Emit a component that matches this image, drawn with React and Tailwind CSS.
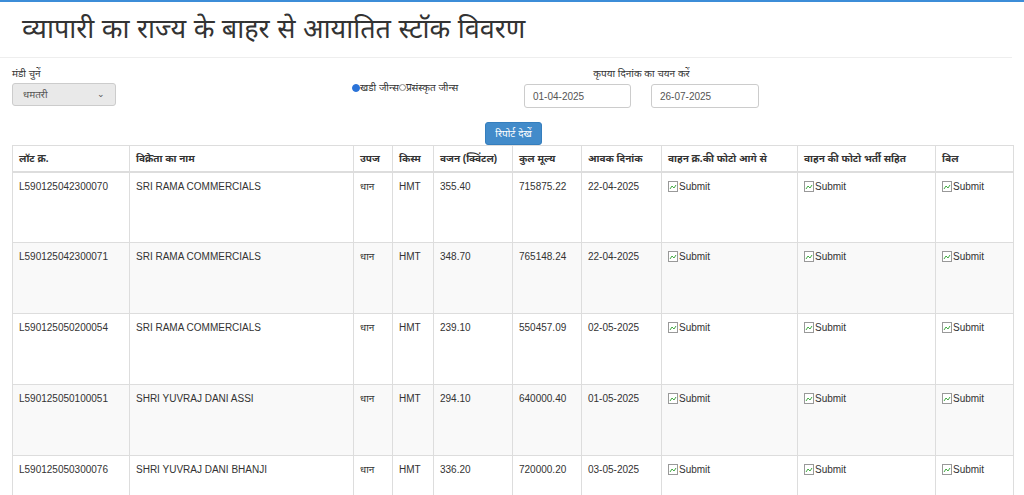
export default function App() {
  const cols = [117, 224, 39, 41, 79, 69, 80, 136, 138, 78];
  const heads = ["लॉट क्र.", "विक्रेता का नाम", "उपज", "किस्म", "वजन (क्विंटल)", "कुल मूल्य", "आवक दिनांक", "वाहन क्र.की फोटो आगे से", "वाहन की फोटो भर्ती सहित", "बिल"];
  const rows = [
    ["L590125042300070", "SRI RAMA COMMERCIALS", "धान", "HMT", "355.40", "715875.22", "22-04-2025"],
    ["L590125042300071", "SRI RAMA COMMERCIALS", "धान", "HMT", "348.70", "765148.24", "22-04-2025"],
    ["L590125050200054", "SRI RAMA COMMERCIALS", "धान", "HMT", "239.10", "550457.09", "02-05-2025"],
    ["L590125050100051", "SHRI YUVRAJ DANI ASSI", "धान", "HMT", "294.10", "640000.40", "01-05-2025"],
    ["L590125050300076", "SHRI YUVRAJ DANI BHANJI", "धान", "HMT", "336.20", "720000.20", "03-05-2025"],
  ];
  const Img = () => (
    <span className="inline-flex items-center gap-[1px]">
      <svg width="10" height="11" viewBox="0 0 10 11"><rect x="0.5" y="0.5" width="9" height="10" fill="#fff" stroke="#999"/><path d="M2 8 L4 5 L6 7 L8 4" stroke="#4a4" fill="none"/></svg>
      Submit
    </span>
  );
  return (
    <div className="w-[1024px] h-[495px] overflow-hidden bg-white text-[#333] border-t-2 border-[#3c8dd8]" style={{ fontFamily: '"Liberation Sans","Noto Sans",sans-serif' }}>
      <h1 className="text-[27px] font-normal leading-none pl-[22px] pt-[14px] pb-[14px] text-[#333] border-b border-[#eee] w-[1012px]">व्यापारी का राज्य के बाहर से आयातित स्टॉक विवरण</h1>
      <div className="flex items-start px-[12px] pt-[8px] text-[10px] h-[64px]">
        <div className="w-[340px]">
          <div>मंडी चुनें</div>
          <div className="mt-[2px] w-[104px] h-[23px] bg-[#e9e9e9] border border-[#ccc] rounded-[3px] flex items-center justify-between px-[10px] text-[#555]">धमतरी<span className="text-[9px]">⌄</span></div>
        </div>
        <div className="w-[172px] pt-[14px] flex items-center">
          <span className="inline-block w-[8px] h-[8px] rounded-full bg-[#2a73d8] border border-[#2a73d8]"></span>खडी जीन्स
          <span className="inline-block w-[7px] h-[7px] rounded-full border border-[#888]"></span>प्रसंस्कृत जीन्स
        </div>
        <div className="flex flex-col items-center">
          <div className="mb-[3px]">कृपया दिनांक का चयन करें</div>
          <div className="flex gap-[20px]">
            <div className="w-[107px] h-[24px] border border-[#ccc] rounded-[3px] flex items-center px-[8px] text-[#555]">01-04-2025</div>
            <div className="w-[108px] h-[24px] border border-[#ccc] rounded-[3px] flex items-center px-[8px] text-[#555]">26-07-2025</div>
          </div>
        </div>
      </div>
      <div className="pl-[485px] h-[23px]">
        <div className="w-[57px] h-[23px] bg-[#428bca] text-white text-[10px] rounded-[3px] flex items-center justify-center border border-[#357ebd]">रिपोर्ट देखें</div>
      </div>
      <table className="ml-[12px] border-collapse text-[10px] table-fixed" style={{ width: 1001 }}>
        <colgroup>{cols.map((w, i) => <col key={i} style={{ width: w }} />)}</colgroup>
        <thead>
          <tr className="h-[26px] bg-white">
            {heads.map((h, i) => <th key={i} className="border border-[#ddd] border-b-2 text-left font-bold px-[6px] align-middle whitespace-nowrap">{h}</th>)}
          </tr>
        </thead>
        <tbody>
          {rows.map((r, ri) => (
            <tr key={ri} className={"h-[71px] " + (ri % 2 ? "bg-[#f9f9f9]" : "bg-white")}>
              {r.map((c, ci) => <td key={ci} className="border border-[#ddd] px-[6px] pt-[6px] align-top whitespace-nowrap overflow-hidden">{c}</td>)}
              {[0, 1, 2].map(k => <td key={k} className="border border-[#ddd] px-[6px] pt-[6px] align-top"><Img /></td>)}
            </tr>
          ))}
        </tbody>
      </table>
    </div>
  );
}
